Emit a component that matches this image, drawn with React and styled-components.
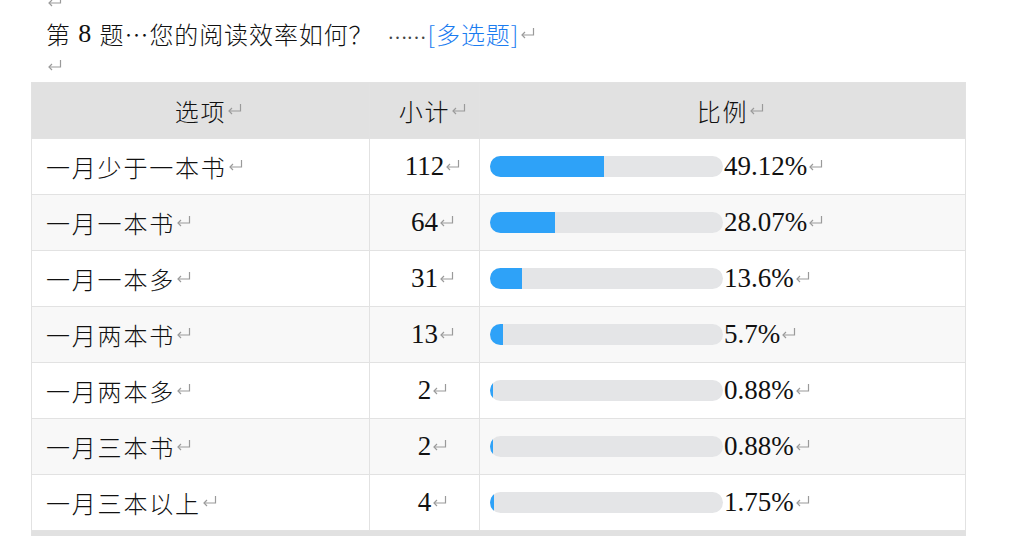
import React from "react";
import styled, { createGlobalStyle } from "styled-components";

const Global = createGlobalStyle`
  html, body { margin: 0; padding: 0; background: #ffffff; overflow: hidden; }
  body { font-family: "Noto Sans CJK SC", "Noto Sans", sans-serif; color: #111111; }
`;

const Page = styled.div`
  width: 1016px;
  height: 536px;
  padding-left: 31px;
  box-sizing: border-box;
  overflow: hidden;
`;

const Doc = styled.div`
  margin-top: -14px;
  padding-left: 15px;
`;

const Para = styled.div`
  height: 32px;
  line-height: 32px;
  font-size: 24px;
  font-weight: 300;
  letter-spacing: 0.9px;
  white-space: nowrap;
  display: flex;
  align-items: center;
`;

const Serif = styled.span`
  font-family: "Liberation Serif", "Times New Roman", serif;
  font-size: 26px;
`;

const Dots = styled.span`
  font-family: "Liberation Serif", "Times New Roman", serif;
  font-size: 20px;
  color: #444;
  margin-left: 14px;
  margin-bottom: 5px;
  letter-spacing: -1px;
`;

const Blue = styled.span`
  color: #1b7cf0;
  margin-left: 2px;
`;

const Mark = styled.svg`
  width: 15px;
  height: 12px;
  margin-left: 1px;
  margin-right: ${(p) => (p.$float ? -16 : 0)}px;
  margin-top: -3px;
  flex: none;
`;

const Ret = ({ float }) => (
  <Mark viewBox="0 0 15 12" $float={float}>
    <path d="M13.5 1 V8 H2" fill="none" stroke="#9a9a9a" strokeWidth="1.2" />
    <path d="M5 5 L2 8 L5 11" fill="none" stroke="#9a9a9a" strokeWidth="1.2" />
  </Mark>
);

const Table = styled.div`
  width: 935px;
  border-left: 1px solid #e2e2e2;
  border-top: 1px solid #e2e2e2;
  box-sizing: border-box;
`;

const Row = styled.div`
  display: grid;
  grid-template-columns: 338px 110px 486px;
  height: 56px;
  background: ${(p) => (p.$head ? "#e1e1e1" : p.$alt ? "#f8f8f8" : "#ffffff")};
`;

const Cell = styled.div`
  display: flex;
  align-items: center;
  justify-content: ${(p) => p.$align || "flex-start"};
  padding-left: ${(p) => p.$pl || 0}px;
  border-right: 1px solid #e2e2e2;
  border-bottom: 1px solid #e2e2e2;
  white-space: nowrap;
  font-size: ${(p) => (p.$serif ? 27 : 24)}px;
  font-weight: ${(p) => (p.$serif ? 400 : 300)};
  letter-spacing: ${(p) => (p.$serif ? 0 : 1.8)}px;
  font-family: ${(p) =>
    p.$serif ? '"Liberation Serif", "Times New Roman", serif' : '"Noto Sans CJK SC", "Noto Sans", sans-serif'};
`;

const Track = styled.div`
  width: 233px;
  height: 21px;
  border-radius: 11px;
  background: #e4e5e7;
  overflow: hidden;
  flex: none;
`;

const Fill = styled.div`
  height: 100%;
  background: #2ea2f8;
`;

const Pct = styled.span`
  font-family: "Liberation Serif", "Times New Roman", serif;
  font-size: 27px;
  font-weight: 400;
  letter-spacing: 0;
  margin-left: 1px;
`;

const rows = [
  ["一月少于一本书", "112", 49.12, "49.12%"],
  ["一月一本书", "64", 28.07, "28.07%"],
  ["一月一本多", "31", 13.6, "13.6%"],
  ["一月两本书", "13", 5.7, "5.7%"],
  ["一月两本多", "2", 0.88, "0.88%"],
  ["一月三本书", "2", 0.88, "0.88%"],
  ["一月三本以上", "4", 1.75, "1.75%"],
];

export default function App() {
  return (
    <Page>
      <Global />
      <Doc>
        <Para><Ret /></Para>
        <Para>
          第<Serif>&nbsp;8&nbsp;</Serif>题⋯您的阅读效率如何？<Dots>……</Dots>
          <Blue>[多选题]</Blue>
          <Ret />
        </Para>
        <Para><Ret /></Para>
      </Doc>
      <Table>
        <Row $head>
          <Cell $align="center">选项<Ret float /></Cell>
          <Cell $align="center">小计<Ret float /></Cell>
          <Cell $align="center">比例<Ret float /></Cell>
        </Row>
        {rows.map(([label, n, v, t], i) => (
          <Row key={i} $alt={i % 2 === 1}>
            <Cell $pl={14}>{label}<Ret /></Cell>
            <Cell $align="center" $serif>{n}<Ret float /></Cell>
            <Cell $pl={10}>
              <Track>
                <Fill style={{ width: `${Math.max(v, 1.2)}%` }} />
              </Track>
              <Pct>{t}</Pct>
              <Ret />
            </Cell>
          </Row>
        ))}
        <Row $head />
      </Table>
    </Page>
  );
}
